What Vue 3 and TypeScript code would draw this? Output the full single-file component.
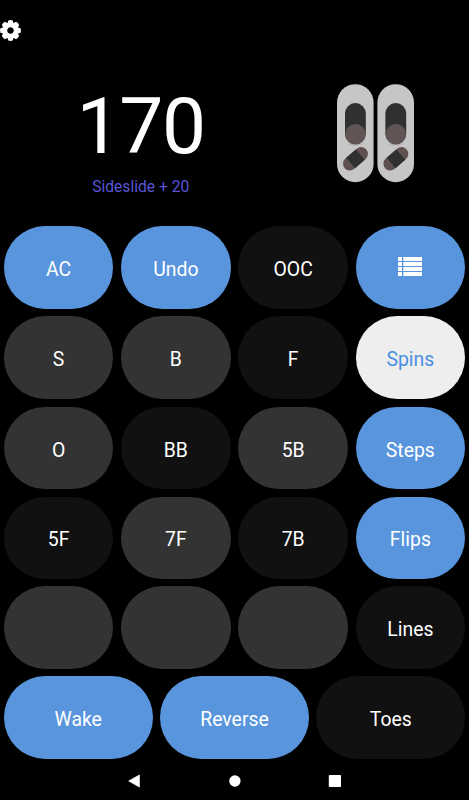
<script setup lang="ts">
type Tone = 'blue' | 'grey' | 'dark' | 'light'
interface Key {
  label: string
  tone: Tone
  icon?: boolean
}

const total = 170
const lastMove = 'Sideslide + 20'

const keys: Key[] = [
  { label: 'AC', tone: 'blue' },
  { label: 'Undo', tone: 'blue' },
  { label: 'OOC', tone: 'dark' },
  { label: '', tone: 'blue', icon: true },
  { label: 'S', tone: 'grey' },
  { label: 'B', tone: 'grey' },
  { label: 'F', tone: 'dark' },
  { label: 'Spins', tone: 'light' },
  { label: 'O', tone: 'grey' },
  { label: 'BB', tone: 'dark' },
  { label: '5B', tone: 'grey' },
  { label: 'Steps', tone: 'blue' },
  { label: '5F', tone: 'dark' },
  { label: '7F', tone: 'grey' },
  { label: '7B', tone: 'dark' },
  { label: 'Flips', tone: 'blue' },
  { label: '', tone: 'grey' },
  { label: '', tone: 'grey' },
  { label: '', tone: 'grey' },
  { label: 'Lines', tone: 'dark' },
]

const wideKeys: Key[] = [
  { label: 'Wake', tone: 'blue' },
  { label: 'Reverse', tone: 'blue' },
  { label: 'Toes', tone: 'dark' },
]

const teeth = [0, 45, 90, 135, 180, 225, 270, 315]
const boards = [0, 40.4]
const listRows = [0, 5, 10, 15]
</script>

<template>
  <main class="screen">
    <header class="topbar">
      <svg class="gear" viewBox="-10.5 -10.5 21 21">
        <path
          v-for="angle in teeth"
          :key="angle"
          d="M-3.4 -6 L-2.2 -10.1 Q0 -10.7 2.2 -10.1 L3.4 -6 Z"
          :transform="`rotate(${angle})`"
          fill="#fff"
        />
        <circle r="5.7" fill="none" stroke="#fff" stroke-width="4.8" />
      </svg>
    </header>

    <section class="display">
      <div class="score">
        <div class="total">{{ total }}</div>
        <div class="move">{{ lastMove }}</div>
      </div>
      <svg class="boards" viewBox="0 0 78 99">
        <g v-for="x in boards" :key="x" :transform="`translate(${x} 0)`">
          <rect x="0" y="0.2" width="36.6" height="98" rx="18.3" fill="#c6c6c6" />
          <ellipse cx="18.4" cy="59.5" rx="7" ry="2.2" fill="#b1b1b1" />
          <rect x="8" y="19.1" width="20.8" height="41" rx="10.4" fill="#303030" />
          <circle cx="18.4" cy="50.3" r="10.3" fill="#605454" />
          <g transform="translate(18.5 74.8) rotate(-41)">
            <rect x="-14.3" y="-6.8" width="28.6" height="13.6" rx="6.8" fill="#605050" />
            <rect x="-6.4" y="-6.8" width="12.8" height="13.6" fill="#303030" />
          </g>
        </g>
      </svg>
    </section>

    <section class="keypad">
      <button v-for="(key, i) in keys" :key="i" class="key" :class="key.tone">
        <svg v-if="key.icon" class="list" viewBox="0 0 24 19">
          <g v-for="y in listRows" :key="y" fill="#fff">
            <rect x="0" :y="y" width="4" height="4" />
            <rect x="5.3" :y="y" width="18.7" height="4" />
          </g>
        </svg>
        <template v-else>{{ key.label }}</template>
      </button>
    </section>
    <section class="keypad wide">
      <button v-for="key in wideKeys" :key="key.label" class="key" :class="key.tone">
        {{ key.label }}
      </button>
    </section>

    <nav class="system">
      <svg viewBox="0 0 14 14"><path d="M0.7 7 L11.4 0.9 V13.1 Z" fill="#fff" stroke="#fff" stroke-width="0.7" stroke-linejoin="round" /></svg>
      <svg viewBox="0 0 14 14"><circle cx="6.9" cy="7" r="5.7" fill="#fff" /></svg>
      <svg viewBox="0 0 14 14"><rect x="0.8" y="0.9" width="12.2" height="12.2" rx="0.8" fill="#fff" /></svg>
    </nav>
  </main>
</template>

<style>
body {
  margin: 0;
  background: #000;
}
</style>

<style scoped>
.screen {
  box-sizing: border-box;
  width: 469px;
  height: 800px;
  overflow: hidden;
  display: flex;
  flex-direction: column;
  background: #000;
  color: #fff;
  font-family: Roboto, sans-serif;
}
.topbar {
  height: 62px;
  flex: none;
  padding-top: 20px;
  box-sizing: border-box;
}
.gear {
  display: block;
  width: 21px;
  height: 21px;
}
.display {
  height: 164px;
  flex: none;
  display: flex;
  align-items: flex-start;
}
.score {
  width: 281.4px;
  flex: none;
  padding-top: 17px;
  text-align: center;
}
.total {
  font-size: 78.5px;
  line-height: 94px;
  letter-spacing: -1.4px;
}
.move {
  margin-top: 4px;
  font-size: 15.6px;
  line-height: 20px;
  color: #5856d6;
}
.boards {
  width: 78px;
  height: 99px;
  margin: 21.6px 0 0 55.6px;
}
.keypad {
  flex: none;
  display: grid;
  grid-template-columns: repeat(4, 1fr);
  grid-template-rows: 82.4px 83px 82.2px 82px 82.4px;
  gap: 7.6px;
  padding: 0.2px 3.8px 0;
}
.wide {
  grid-template-columns: repeat(3, 1fr);
  grid-template-rows: 82.4px;
  padding-top: 7.6px;
}
.key {
  display: flex;
  align-items: center;
  justify-content: center;
  min-width: 0;
  margin: 0;
  padding: 4.4px 0 0;
  border: 0;
  border-radius: 41.2px;
  font-family: inherit;
  font-size: 19.4px;
  color: #fff;
}
.blue {
  background: #5895dd;
}
.grey {
  background: #333;
}
.dark {
  background: #111;
}
.light {
  background: #eee;
  color: #4a90e2;
}
.list {
  width: 24px;
  height: 19px;
  margin-bottom: 6.4px;
}
.system {
  flex: none;
  display: flex;
  justify-content: center;
  gap: 86px;
  padding-top: 15.6px;
}
.system svg {
  width: 14px;
  height: 14px;
}
</style>
